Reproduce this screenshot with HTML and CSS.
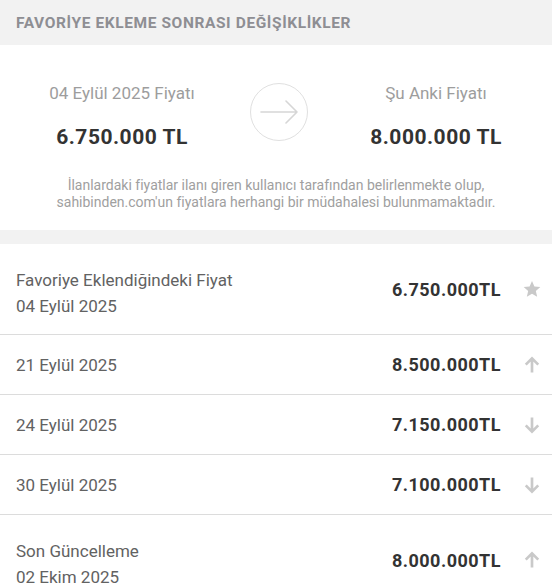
FILE: index.html
```html
<!DOCTYPE html>
<html lang="tr">
<head>
  <meta charset="UTF-8">
  <meta name="viewport" content="width=device-width, initial-scale=1.0">
  <title>Favoriye Ekleme Sonrası Değişiklikler</title>
  <link rel="stylesheet" href="styles.css">
</head>
<body>
  <div class="section-title">FAVORİYE EKLEME SONRASI DEĞİŞİKLİKLER</div>

  <div class="summary">
    <div class="compare">
      <div class="col">
        <div class="label">04 Eylül 2025 Fiyatı</div>
        <div class="value">6.750.000 TL</div>
      </div>
      <div class="circle">
        <svg width="40" height="24" viewBox="0 0 40 24">
          <path d="M2 12H38M27 1L38 12L27 23" fill="none" stroke="#d6d6d6" stroke-width="1.6" stroke-linecap="round" stroke-linejoin="round"/>
        </svg>
      </div>
      <div class="col">
        <div class="label">Şu Anki Fiyatı</div>
        <div class="value">8.000.000 TL</div>
      </div>
    </div>
    <p class="note">İlanlardaki fiyatlar ilanı giren kullanıcı tarafından belirlenmekte olup,<br>sahibinden.com'un fiyatlara herhangi bir müdahalesi bulunmamaktadır.</p>
  </div>

  <ul class="history">
    <li class="row tall">
      <div class="info">
        <div>Favoriye Eklendiğindeki Fiyat</div>
        <div>04 Eylül 2025</div>
      </div>
      <div class="price">6.750.000TL</div>
      <svg class="icon" width="20" height="20" viewBox="0 0 24 24"><path d="M12 2.5l2.9 6.6 7.1.6-5.4 4.7 1.6 7-6.2-3.7-6.2 3.7 1.6-7L2 9.7l7.1-.6z" fill="#c9c9c9"/></svg>
    </li>
    <li class="row">
      <div class="info"><div>21 Eylül 2025</div></div>
      <div class="price">8.500.000TL</div>
      <svg class="icon" width="20" height="20" viewBox="0 0 24 24"><path d="M12 21V4.5M4.5 11.5L12 4l7.5 7.5" fill="none" stroke="#c9c9c9" stroke-width="3.2"/></svg>
    </li>
    <li class="row">
      <div class="info"><div>24 Eylül 2025</div></div>
      <div class="price">7.150.000TL</div>
      <svg class="icon" width="20" height="20" viewBox="0 0 24 24"><path d="M12 3v16.5M4.5 12.5L12 20l7.5-7.5" fill="none" stroke="#c9c9c9" stroke-width="3.2"/></svg>
    </li>
    <li class="row">
      <div class="info"><div>30 Eylül 2025</div></div>
      <div class="price">7.100.000TL</div>
      <svg class="icon" width="20" height="20" viewBox="0 0 24 24"><path d="M12 3v16.5M4.5 12.5L12 20l7.5-7.5" fill="none" stroke="#c9c9c9" stroke-width="3.2"/></svg>
    </li>
    <li class="row tall">
      <div class="info">
        <div>Son Güncelleme</div>
        <div>02 Ekim 2025</div>
      </div>
      <div class="price">8.000.000TL</div>
      <svg class="icon" width="20" height="20" viewBox="0 0 24 24"><path d="M12 21V4.5M4.5 11.5L12 4l7.5 7.5" fill="none" stroke="#c9c9c9" stroke-width="3.2"/></svg>
    </li>
  </ul>
</body>
</html>
```

FILE: styles.css
```css
body { margin: 0; background: #fff; font-family: Roboto, "Liberation Sans", sans-serif; color: #333; }

.section-title { height: 45px; display: flex; align-items: center; padding: 0 16px; background: #f2f2f2; color: #8e8e93; font-size: 15.5px; font-weight: 700; letter-spacing: 0.6px; }

.summary { height: 185px; box-sizing: border-box; padding-top: 38px; }
.compare { display: grid; grid-template-columns: 200px 58px 200px; column-gap: 28px; justify-content: center; align-items: start; padding-left: 6px; }
.col { text-align: center; }
.label { font-size: 17px; line-height: 20px; color: #9d9d9d; }
.value { margin-top: 20px; font-size: 21px; line-height: 28px; font-weight: 700; letter-spacing: 0.5px; color: #333; }
.circle { width: 58px; height: 58px; box-sizing: border-box; border: 1.5px solid #e0e0e0; border-radius: 50%; display: flex; align-items: center; justify-content: center; }
.note { margin: 26px 0 0; text-align: center; font-size: 14px; line-height: 17px; color: #a0a0a0; }

.history { list-style: none; margin: 0; padding: 0; border-top: 14px solid #f2f2f2; }
.row { display: flex; align-items: center; height: 59px; padding: 0 10px 0 16px; border-bottom: 1px solid #dcdcdc; }
.row.tall { height: 90px; }
.info { flex: 1; font-size: 17px; line-height: 26px; color: #626262; }
.tall .info { padding-top: 7px; }
.price { font-size: 18px; font-weight: 700; letter-spacing: 0.5px; color: #333; }
.icon { margin-left: 21px; }
```
